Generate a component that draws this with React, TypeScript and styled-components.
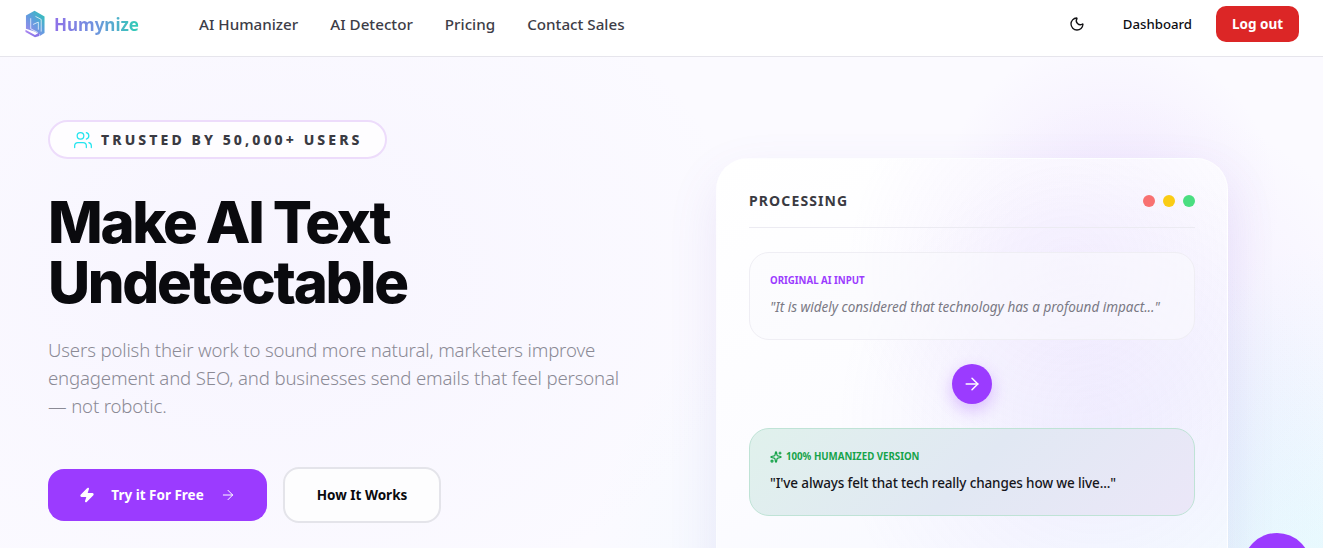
import React from 'react';
import styled, { createGlobalStyle } from 'styled-components';
import { ArrowRight, Moon, Users, Zap, Sparkles } from 'lucide-react';

const GlobalStyle = createGlobalStyle`
  html, body {
    margin: 0;
    height: 100%;
    overflow: hidden;
    font-family: "Noto Sans", "Open Sans", sans-serif;
    background: #ffffff;
  }
  * { box-sizing: border-box; }
`;

const Page = styled.div`
  height: 548px;
  overflow: hidden;
  position: relative;
`;

const Navbar = styled.header`
  height: 57px;
  display: flex;
  align-items: center;
  background: #ffffff;
  border-bottom: 1px solid #e6e5ec;
  padding: 0 24px 8px 25px;
`;

const Brand = styled.a`
  display: flex;
  align-items: center;
  gap: 9px;
  width: 174px;
`;

const BrandName = styled.span`
  font-size: 17px;
  font-weight: 700;
  background: linear-gradient(90deg, #8f70e8 0%, #6f95de 50%, #2fcdb5 100%);
  -webkit-background-clip: text;
  background-clip: text;
  color: transparent;
`;

const NavLinks = styled.nav`
  display: flex;
  gap: 32px;
  flex: 1;
`;

const NavLink = styled.a`
  font-size: 15.2px;
  font-weight: 500;
  color: #3d3d47;
`;

const NavActions = styled.div`
  display: flex;
  align-items: center;
`;

const ThemeToggle = styled.span`
  display: flex;
  color: #111114;
  margin-right: 38px;
`;

const DashboardLink = styled.a`
  font-size: 13.2px;
  font-weight: 500;
  color: #0d0d12;
  margin-right: 24px;
`;

const LogoutButton = styled.button`
  width: 83px;
  height: 36px;
  border: none;
  border-radius: 10px;
  background: #dc2626;
  color: #ffffff;
  font-family: inherit;
  font-size: 13.5px;
  font-weight: 700;
`;

const Hero = styled.main`
  height: 491px;
  display: grid;
  grid-template-columns: 1fr 512px;
  padding: 63px 95px 0 48px;
  background:
    radial-gradient(circle 170px at 1110px 150px, rgba(190, 140, 250, 0.14), transparent 100%),
    radial-gradient(circle 260px at 1130px 300px, rgba(180, 140, 250, 0.12), transparent 100%),
    radial-gradient(circle 300px at 1323px 491px, rgba(150, 245, 250, 0.16), transparent 100%),
    radial-gradient(circle 420px at 1000px 560px, rgba(150, 240, 250, 0.16), transparent 100%),
    radial-gradient(ellipse 500px 360px at 260px 220px, rgba(200, 180, 250, 0.08), transparent 100%),
    #fbfaff;
`;

const Copy = styled.section`
  display: flex;
  flex-direction: column;
  align-items: flex-start;
`;

const TrustBadge = styled.div`
  height: 39px;
  width: 339px;
  display: flex;
  align-items: center;
  gap: 8px;
  padding-left: 23px;
  border: 2px solid #eddcfb;
  border-radius: 999px;
  background: #fefdff;
  color: #3a3a42;
  font-size: 14px;
  font-weight: 800;
  letter-spacing: 0.22em;
  white-space: nowrap;
  svg { color: #22e4ee; flex: none; }
`;

const Headline = styled.h1`
  margin: 33px 0 0;
  font-family: "Inter", "Lato", sans-serif;
  font-size: 58px;
  font-weight: 800;
  line-height: 60px;
  letter-spacing: -0.04em;
  color: #0a0a0e;
`;

const Lead = styled.p`
  margin: 24px 0 0;
  max-width: 580px;
  font-size: 18.6px;
  font-weight: 300;
  line-height: 28px;
  letter-spacing: -0.15px;
  color: #8b8a95;
`;

const CtaRow = styled.div`
  display: flex;
  align-items: center;
  gap: 16px;
  margin-top: 47px;
`;

const PrimaryCta = styled.button`
  width: 219px;
  height: 52px;
  display: flex;
  align-items: center;
  justify-content: center;
  gap: 16px;
  border: none;
  border-radius: 16px;
  background: #9b3bff;
  color: #ffffff;
  font-family: inherit;
  font-size: 13.5px;
  font-weight: 700;
`;

const SecondaryCta = styled.button`
  width: 158px;
  height: 56px;
  border: 2px solid #e4e4ea;
  border-radius: 16px;
  background: #fdfdfe;
  color: #0a0a0e;
  font-family: inherit;
  font-size: 13.5px;
  font-weight: 700;
`;

const DemoCard = styled.aside`
  margin-top: 38px;
  height: 500px;
  padding: 32px;
  border: 1px solid rgba(255, 255, 255, 0.7);
  border-radius: 32px;
  background:
    radial-gradient(circle 220px at 350px 110px, rgba(190, 150, 250, 0.12), transparent 100%),
    radial-gradient(circle 260px at 380px 260px, rgba(170, 150, 250, 0.1), transparent 100%),
    linear-gradient(155deg, #ffffff 0%, #fcfcff 45%, #f8f9ff 70%, #f4feff 100%);
  box-shadow: 0 20px 50px rgba(120, 90, 200, 0.12);
`;

const CardHeader = styled.div`
  display: flex;
  align-items: center;
  justify-content: space-between;
  height: 37px;
  padding-bottom: 16px;
  border-bottom: 1px solid #ecebf2;
`;

const CardTitle = styled.span`
  padding-bottom: 2px;
  font-size: 14px;
  font-weight: 700;
  letter-spacing: 0.08em;
  color: #3a3a42;
`;

const WindowDots = styled.div`
  display: flex;
  gap: 8px;
`;

const Dot = styled.span<{ $color: string }>`
  width: 12px;
  height: 12px;
  border-radius: 50%;
  background: ${({ $color }) => $color};
`;

const TextPanel = styled.div<{ $result?: boolean }>`
  height: 88px;
  padding: 21px 20px 20px;
  border-radius: 20px;
  border: 1px solid ${({ $result }) => ($result ? '#bfe3d6' : '#efeef4')};
  background: ${({ $result }) =>
    $result
      ? 'linear-gradient(135deg, #e0f1ec 0%, #e1e8f3 50%, #ebe7f8 100%)'
      : 'rgba(250, 250, 254, 0.6)'};
`;

const InputPanel = styled(TextPanel)`
  margin-top: 24px;
`;

const PanelLabel = styled.div<{ $color: string }>`
  display: flex;
  align-items: center;
  gap: 4px;
  font-size: 9.7px;
  line-height: 14px;
  font-weight: 700;
  color: ${({ $color }) => $color};
`;

const InputText = styled.p`
  margin: 9px 0 0;
  font-size: 13.5px;
  line-height: 20px;
  font-style: italic;
  color: #7a7984;
`;

const ResultText = styled.p`
  margin: 9px 0 0;
  font-size: 13.5px;
  line-height: 20px;
  font-weight: 500;
  letter-spacing: -0.14px;
  color: #16161c;
`;

const ArrowRow = styled.div`
  display: flex;
  justify-content: center;
  margin: 24px 0;
`;

const ArrowBubble = styled.span`
  width: 40px;
  height: 40px;
  display: flex;
  align-items: center;
  justify-content: center;
  border-radius: 50%;
  background: #9b3bff;
  color: #ffffff;
  box-shadow: 0 6px 16px rgba(155, 59, 255, 0.3);
`;

const ChatBubble = styled.span`
  position: absolute;
  left: 1243px;
  top: 533px;
  width: 68px;
  height: 68px;
  border-radius: 50%;
  background: #9b3bff;
`;

const LogoMark = () => (
  <svg width="20" height="28" viewBox="0 0 21 28" fill="none">
    <defs>
      <linearGradient id="logoBody" x1="0.9" y1="0" x2="0.1" y2="1">
        <stop offset="0" stopColor="#2ec4b6" />
        <stop offset="0.45" stopColor="#5b9fdc" />
        <stop offset="1" stopColor="#a585f0" />
      </linearGradient>
      <linearGradient id="logoBase" x1="0" y1="0" x2="1" y2="1">
        <stop offset="0" stopColor="#b08af2" />
        <stop offset="1" stopColor="#7f6fe6" />
      </linearGradient>
    </defs>
    <path d="M10 0l10.5 6v17.5l-5 3V25L10 22 1 19V5z" fill="url(#logoBody)" />
    <path d="M0.5 20l10 5.5L15 23v3.5L10.5 28l-10-5.5z" fill="url(#logoBase)" />
    <path d="M6 8v11l7.5 4M11 6l6 3.2V22M8.5 14.5l5.5-2.5v8" stroke="#ffffff" strokeWidth="1" opacity="0.75" />
  </svg>
);

export default function App() {
  return (
    <Page>
      <GlobalStyle />
      <Navbar>
        <Brand>
          <LogoMark />
          <BrandName>Humynize</BrandName>
        </Brand>
        <NavLinks>
          <NavLink>AI Humanizer</NavLink>
          <NavLink>AI Detector</NavLink>
          <NavLink>Pricing</NavLink>
          <NavLink>Contact Sales</NavLink>
        </NavLinks>
        <NavActions>
          <ThemeToggle>
            <Moon size={16} strokeWidth={2} />
          </ThemeToggle>
          <DashboardLink>Dashboard</DashboardLink>
          <LogoutButton>Log out</LogoutButton>
        </NavActions>
      </Navbar>
      <Hero>
        <Copy>
          <TrustBadge>
            <Users size={20} strokeWidth={1.5} />
            TRUSTED BY 50,000+ USERS
          </TrustBadge>
          <Headline>
            Make AI Text
            <br />
            Undetectable
          </Headline>
          <Lead>
            Users polish their work to sound more natural, marketers improve engagement and SEO, and businesses send
            emails that feel personal — not robotic.
          </Lead>
          <CtaRow>
            <PrimaryCta>
              <Zap size={16} fill="currentColor" />
              Try it For Free
              <ArrowRight size={16} strokeWidth={1.5} />
            </PrimaryCta>
            <SecondaryCta>How It Works</SecondaryCta>
          </CtaRow>
        </Copy>
        <DemoCard>
          <CardHeader>
            <CardTitle>PROCESSING</CardTitle>
            <WindowDots>
              <Dot $color="#f87171" />
              <Dot $color="#facc15" />
              <Dot $color="#4ade80" />
            </WindowDots>
          </CardHeader>
          <InputPanel>
            <PanelLabel $color="#9b3bff">ORIGINAL AI INPUT</PanelLabel>
            <InputText>"It is widely considered that technology has a profound impact..."</InputText>
          </InputPanel>
          <ArrowRow>
            <ArrowBubble>
              <ArrowRight size={20} strokeWidth={1.75} />
            </ArrowBubble>
          </ArrowRow>
          <TextPanel $result>
            <PanelLabel $color="#16a34a">
              <Sparkles size={12} strokeWidth={2.5} />
              100% HUMANIZED VERSION
            </PanelLabel>
            <ResultText>"I've always felt that tech really changes how we live..."</ResultText>
          </TextPanel>
        </DemoCard>
      </Hero>
      <ChatBubble />
    </Page>
  );
}
